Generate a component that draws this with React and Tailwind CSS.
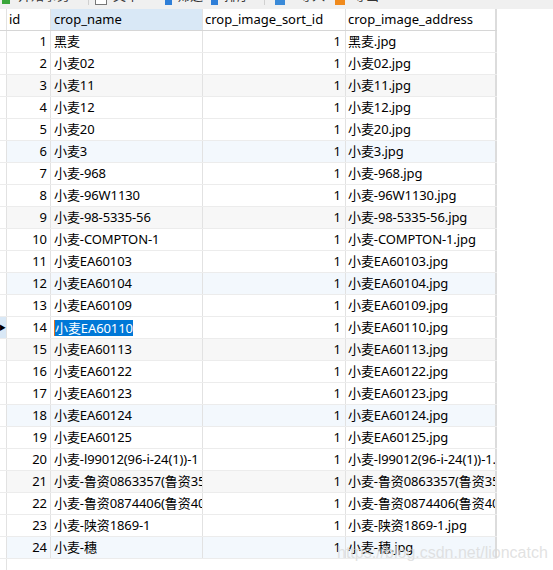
import React from 'react';

const rows = [
  [1, '黑麦', '黑麦.jpg'],
  [2, '小麦02', '小麦02.jpg'],
  [3, '小麦11', '小麦11.jpg'],
  [4, '小麦12', '小麦12.jpg'],
  [5, '小麦20', '小麦20.jpg'],
  [6, '小麦3', '小麦3.jpg'],
  [7, '小麦-968', '小麦-968.jpg'],
  [8, '小麦-96W1130', '小麦-96W1130.jpg'],
  [9, '小麦-98-5335-56', '小麦-98-5335-56.jpg'],
  [10, '小麦-COMPTON-1', '小麦-COMPTON-1.jpg'],
  [11, '小麦EA60103', '小麦EA60103.jpg'],
  [12, '小麦EA60104', '小麦EA60104.jpg'],
  [13, '小麦EA60109', '小麦EA60109.jpg'],
  [14, '小麦EA60110', '小麦EA60110.jpg'],
  [15, '小麦EA60113', '小麦EA60113.jpg'],
  [16, '小麦EA60122', '小麦EA60122.jpg'],
  [17, '小麦EA60123', '小麦EA60123.jpg'],
  [18, '小麦EA60124', '小麦EA60124.jpg'],
  [19, '小麦EA60125', '小麦EA60125.jpg'],
  [20, '小麦-l99012(96-i-24(1))-1', '小麦-l99012(96-i-24(1))-1.jpg'],
  [21, '小麦-鲁资0863357(鲁资3578)', '小麦-鲁资0863357(鲁资3578).jpg'],
  [22, '小麦-鲁资0874406(鲁资4069)', '小麦-鲁资0874406(鲁资4069).jpg'],
  [23, '小麦-陕资1869-1', '小麦-陕资1869-1.jpg'],
  [24, '小麦-穗', '小麦-穗.jpg'],
];

const font = { fontFamily: '"Noto Sans", "Noto Sans CJK SC", sans-serif' };

function rowBg(id) {
  if (id % 6 === 0) return 'bg-[#f3f8fd]';
  if (id % 3 === 0) return 'bg-[#f7f7f7]';
  return 'bg-white';
}

function Toolbar() {
  return (
    <div className="h-[9px] bg-[#f0f0f0] overflow-hidden">
      <div className="flex items-end h-[18px] -translate-y-[13px] pl-[2px] text-[13px] text-[#333] whitespace-nowrap">
        <span className="w-[8px] h-[6px] bg-[#3aa63a] mb-[1px]" />
        <span className="ml-[8px]">开始事务</span>
        <span className="w-px h-[18px] bg-[#d0d0d0] ml-[18px]" />
        <span className="w-[12px] h-[12px] border border-[#777] bg-white ml-[6px]" />
        <span className="ml-[6px]">文本</span>
        <span className="w-[7px] h-[6px] bg-[#2f7fd8] ml-[26px]" />
        <span className="ml-[5px]">筛选</span>
        <span className="w-[7px] h-[6px] bg-[#2f7fd8] ml-[8px]" />
        <span className="ml-[6px]">排序</span>
        <span className="w-px h-[18px] bg-[#d0d0d0] ml-[14px]" />
        <span className="w-[10px] h-[5px] bg-[#3a8ad8] ml-[10px]" />
        <span className="ml-[14px]">导入</span>
        <span className="w-[10px] h-[5px] bg-[#f08a1c] ml-[10px]" />
        <span className="ml-[8px]">导出</span>
      </div>
    </div>
  );
}

export default function App() {
  return (
    <div className="relative w-[553px] h-[570px] bg-white overflow-hidden text-[13px] text-black" style={font}>
      <Toolbar />
      <div className="flex h-[561px]">
        <div className="w-[497px] flex flex-col">
          <div className="grid grid-cols-[7px_44px_152px_143px_151px] h-[22px] border-b border-[#d6d6d6]">
            <div className="border-r border-[#e2e2e2]" />
            <div className="border-r border-[#e2e2e2] pl-[2px] flex items-center">id</div>
            <div className="border-r border-[#e2e2e2] bg-[#d9e8f6] pl-[3px] flex items-center">crop_name</div>
            <div className="border-r border-[#e2e2e2] pl-[2px] flex items-center">crop_image_sort_id</div>
            <div className="border-r-2 border-[#dcdcdc] pl-[2px] flex items-center">crop_image_address</div>
          </div>
          {rows.map(([id, name, addr]) => {
            const sel = id === 14;
            return (
              <div key={id} className={`grid grid-cols-[7px_44px_152px_143px_151px] h-[22px] border-b border-[#ececec] ${rowBg(id)}`}>
                <div className={`border-r border-[#e2e2e2] flex items-center overflow-hidden ${sel ? 'bg-[#d9e8f6]' : 'bg-white'}`}>
                  {sel && <span className="text-[7px] leading-none -ml-[1px]">▶</span>}
                </div>
                <div className="border-r border-[#e2e2e2] pr-[3px] flex items-center justify-end">{id}</div>
                <div className="border-r border-[#e2e2e2] pl-[3px] flex items-center overflow-hidden whitespace-nowrap tracking-[-0.1px]">
                  {sel ? (
                    <span className="flex items-center">
                      <span className="w-px h-[16px] bg-[#e8731c]" />
                      <span className="bg-[#0078d7] text-white leading-[16px]">{name}</span>
                    </span>
                  ) : (
                    name
                  )}
                </div>
                <div className="border-r border-[#e2e2e2] pr-[4px] flex items-center justify-end">1</div>
                <div className="border-r-2 border-[#dcdcdc] pl-[2px] flex items-center overflow-hidden whitespace-nowrap tracking-[-0.1px]">{addr}</div>
              </div>
            );
          })}
          <div className="flex-1 flex">
            <div className="w-[7px] border-r border-[#e2e2e2]" />
          </div>
        </div>
        <div className="flex-1" />
      </div>
      <div
        className="absolute left-[337px] top-[541px] text-[16px] text-[#dadada]/80 whitespace-nowrap"
        style={{ fontFamily: '"Liberation Sans", Arial, sans-serif' }}
      >
        https://blog.csdn.net/lioncatch
      </div>
    </div>
  );
}
